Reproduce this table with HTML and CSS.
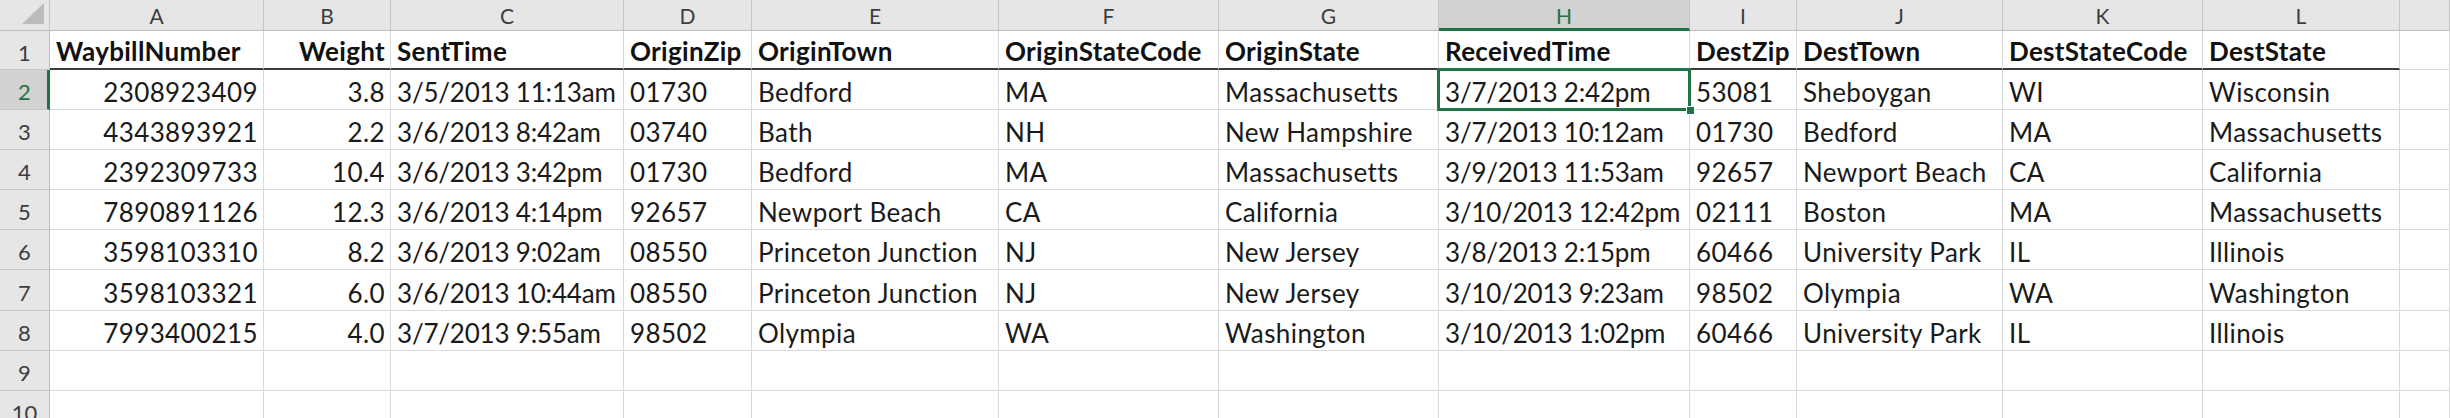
FILE: index.html
```html
<!DOCTYPE html>
<html>
<head>
<meta charset="utf-8">
<link rel="stylesheet" href="styles.css">
</head>
<body>
<div class="sheet">
  <div class="row hdr">
    <div class="c corner"><svg width="50" height="31" viewBox="0 0 50 31"><polygon points="44,3 44,24 22,24" fill="#bcbcbc"/></svg></div>
    <div class="c ch">A</div><div class="c ch">B</div><div class="c ch">C</div><div class="c ch">D</div><div class="c ch">E</div><div class="c ch">F</div><div class="c ch">G</div><div class="c ch on">H</div><div class="c ch">I</div><div class="c ch">J</div><div class="c ch">K</div><div class="c ch">L</div><div class="c ch"></div>
  </div>
  <div class="row r1">
    <div class="c rh">1</div>
    <div class="c b">WaybillNumber</div><div class="c b n">Weight</div><div class="c b">SentTime</div><div class="c b">OriginZip</div><div class="c b">OriginTown</div><div class="c b">OriginStateCode</div><div class="c b">OriginState</div><div class="c b">ReceivedTime</div><div class="c b">DestZip</div><div class="c b">DestTown</div><div class="c b">DestStateCode</div><div class="c b">DestState</div><div class="c"></div>
  </div>
  <div class="row">
    <div class="c rh on">2</div>
    <div class="c n">2308923409</div><div class="c n">3.8</div><div class="c d">3/5/2013 11:13am</div><div class="c">01730</div><div class="c">Bedford</div><div class="c">MA</div><div class="c">Massachusetts</div><div class="c d sel">3/7/2013 2:42pm<span class="handle"></span></div><div class="c">53081</div><div class="c">Sheboygan</div><div class="c">WI</div><div class="c">Wisconsin</div><div class="c"></div>
  </div>
  <div class="row">
    <div class="c rh">3</div>
    <div class="c n">4343893921</div><div class="c n">2.2</div><div class="c d">3/6/2013 8:42am</div><div class="c">03740</div><div class="c">Bath</div><div class="c">NH</div><div class="c">New Hampshire</div><div class="c d">3/7/2013 10:12am</div><div class="c">01730</div><div class="c">Bedford</div><div class="c">MA</div><div class="c">Massachusetts</div><div class="c"></div>
  </div>
  <div class="row">
    <div class="c rh">4</div>
    <div class="c n">2392309733</div><div class="c n">10.4</div><div class="c d">3/6/2013 3:42pm</div><div class="c">01730</div><div class="c">Bedford</div><div class="c">MA</div><div class="c">Massachusetts</div><div class="c d">3/9/2013 11:53am</div><div class="c">92657</div><div class="c">Newport Beach</div><div class="c">CA</div><div class="c">California</div><div class="c"></div>
  </div>
  <div class="row">
    <div class="c rh">5</div>
    <div class="c n">7890891126</div><div class="c n">12.3</div><div class="c d">3/6/2013 4:14pm</div><div class="c">92657</div><div class="c">Newport Beach</div><div class="c">CA</div><div class="c">California</div><div class="c d">3/10/2013 12:42pm</div><div class="c">02111</div><div class="c">Boston</div><div class="c">MA</div><div class="c">Massachusetts</div><div class="c"></div>
  </div>
  <div class="row">
    <div class="c rh">6</div>
    <div class="c n">3598103310</div><div class="c n">8.2</div><div class="c d">3/6/2013 9:02am</div><div class="c">08550</div><div class="c">Princeton Junction</div><div class="c">NJ</div><div class="c">New Jersey</div><div class="c d">3/8/2013 2:15pm</div><div class="c">60466</div><div class="c">University Park</div><div class="c">IL</div><div class="c">Illinois</div><div class="c"></div>
  </div>
  <div class="row">
    <div class="c rh">7</div>
    <div class="c n">3598103321</div><div class="c n">6.0</div><div class="c d">3/6/2013 10:44am</div><div class="c">08550</div><div class="c">Princeton Junction</div><div class="c">NJ</div><div class="c">New Jersey</div><div class="c d">3/10/2013 9:23am</div><div class="c">98502</div><div class="c">Olympia</div><div class="c">WA</div><div class="c">Washington</div><div class="c"></div>
  </div>
  <div class="row">
    <div class="c rh">8</div>
    <div class="c n">7993400215</div><div class="c n">4.0</div><div class="c d">3/7/2013 9:55am</div><div class="c">98502</div><div class="c">Olympia</div><div class="c">WA</div><div class="c">Washington</div><div class="c d">3/10/2013 1:02pm</div><div class="c">60466</div><div class="c">University Park</div><div class="c">IL</div><div class="c">Illinois</div><div class="c"></div>
  </div>
  <div class="row">
    <div class="c rh">9</div>
    <div class="c"></div><div class="c"></div><div class="c"></div><div class="c"></div><div class="c"></div><div class="c"></div><div class="c"></div><div class="c"></div><div class="c"></div><div class="c"></div><div class="c"></div><div class="c"></div><div class="c"></div>
  </div>
  <div class="row">
    <div class="c rh">10</div>
    <div class="c"></div><div class="c"></div><div class="c"></div><div class="c"></div><div class="c"></div><div class="c"></div><div class="c"></div><div class="c"></div><div class="c"></div><div class="c"></div><div class="c"></div><div class="c"></div><div class="c"></div>
  </div>
</div>
</body>
</html>
```
FILE: styles.css
```css
html, body {
  margin: 0;
  padding: 0;
  background: #ffffff;
}
body {
  width: 2450px;
  height: 418px;
  overflow: hidden;
  font-family: "Lato", "Open Sans", sans-serif;
}
.sheet {
  --cols: 50px 214px 127px 233px 128px 247px 220px 220px 251px 107px 206px 200px 197px 1fr;
}
.row {
  display: grid;
  grid-template-columns: var(--cols);
  height: 40.1px;
}
.row.hdr { height: 31px; }
.row.r1 { height: 39px; }
.c {
  box-sizing: border-box;
  border-right: 1px solid #dadada;
  border-bottom: 1px solid #dadada;
  padding: 0 5px 4px 6px;
  display: flex;
  align-items: flex-end;
  white-space: nowrap;
  overflow: hidden;
  font-size: 26px;
  letter-spacing: 0.4px;
  line-height: 1;
  color: #1a1a1a;
}
.c.n { justify-content: flex-end; }
.c.d { letter-spacing: -0.2px; }
.c.b {
  font-weight: 700;
  color: #111111;
  font-size: 26px;
  letter-spacing: 0.3px;
}
.r1 .c:not(.rh):not(:last-child) {
  border-bottom: 2px solid #3c3c3c;
  padding-bottom: 4px;
}
.hdr .c {
  background: #e6e6e6;
  border-right: 1px solid #c4c4c4;
  border-bottom: 1px solid #bdbdbd;
  justify-content: center;
  align-items: center;
  padding: 0;
  font-size: 21px;
  letter-spacing: 0;
  color: #3d3d3d;
}
.hdr .corner {
  padding: 0;
  display: block;
}
.hdr .corner svg { display: block; }
.hdr .c.on {
  background: #d2d2d2;
  color: #217346;
  border-bottom: 3px solid #217346;
  padding-top: 2px;
}
.c.rh {
  background: #e6e6e6;
  border-right: 1px solid #bdbdbd;
  border-bottom: 1px solid #c6c6c6;
  justify-content: center;
  align-items: center;
  padding: 5px 0 0 0;
  font-size: 22px;
  letter-spacing: 0;
  color: #3d3d3d;
}
.c.rh.on {
  background: #d2d2d2;
  color: #217346;
  border-right: 3px solid #217346;
  padding-left: 2px;
}
.c.sel {
  position: relative;
  overflow: visible;
  z-index: 2;
}
.c.sel::after {
  content: "";
  position: absolute;
  left: -2px;
  top: -2px;
  right: -2px;
  bottom: -2px;
  border: 3px solid #217346;
  pointer-events: none;
}
.handle {
  position: absolute;
  right: -6px;
  bottom: -6px;
  width: 7px;
  height: 7px;
  background: #217346;
  border: 1px solid #ffffff;
  z-index: 3;
}
```
